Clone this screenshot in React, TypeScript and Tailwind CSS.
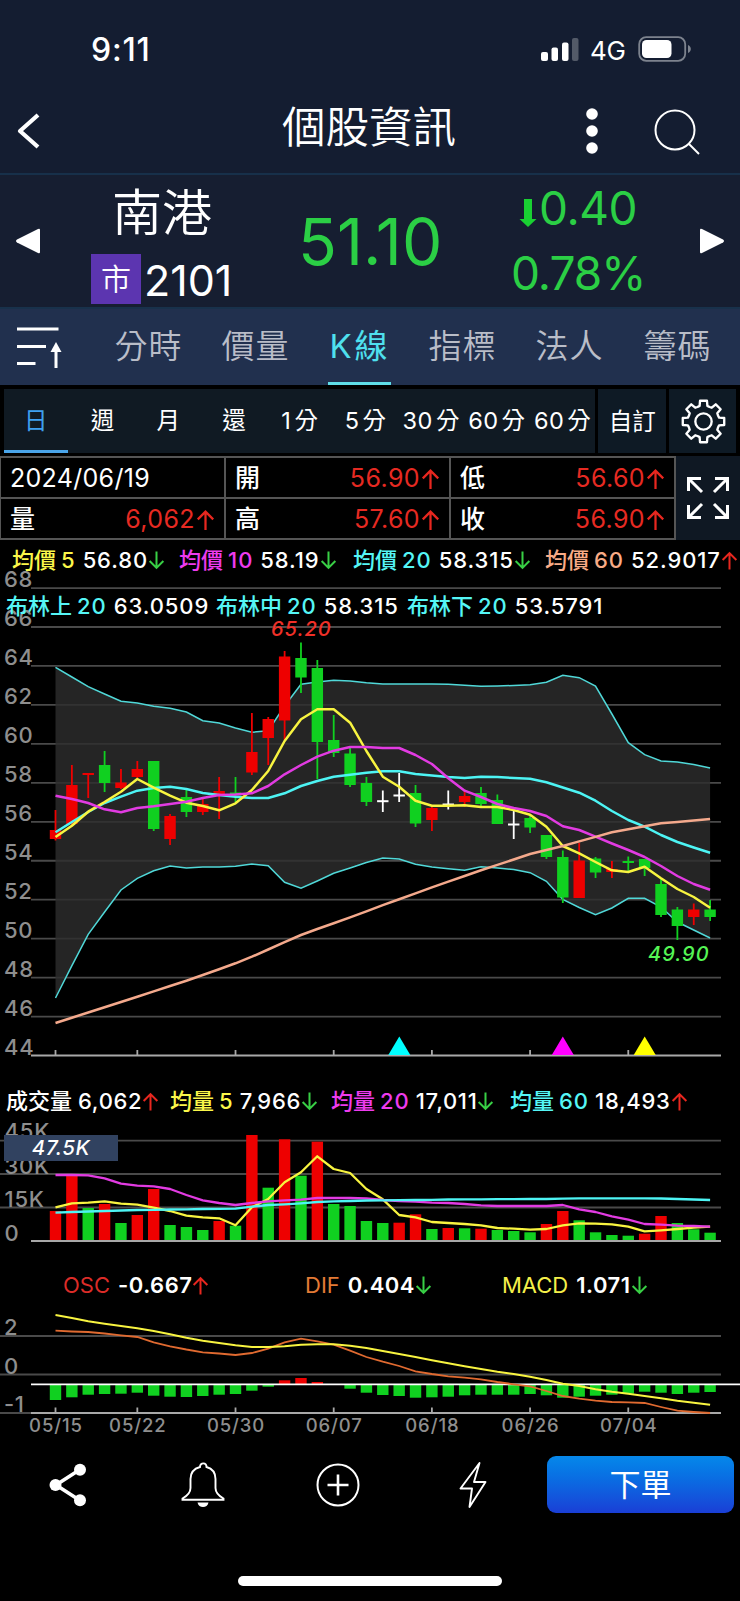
import React from 'react';

type Direction = 'up' | 'down';

interface LegendItem {
  name: string;
  period?: string;
  value: string;
  labelClass: string;
  dir?: Direction;
}

interface Candle {
  c: 'r' | 'g' | 'w';
  top: number;
  bottom: number;
  high: number;
  low: number;
}

const RED = '#ee0000';
const GREEN = '#10d020';

const STEP = 16.365;
const FIRST_X = 55.5;
const BAR_WIDTH = 11.4;

const xAt = (i: number) => FIRST_X + i * STEP;

function toPoints(ys: number[]): string {
  return ys.map((y, i) => `${xAt(i).toFixed(1)},${y}`).join(' ');
}

const TABS = ['分時', '價量', 'K線', '指標', '法人', '籌碼'];
const PERIODS = [
  ['', '日'],
  ['', '週'],
  ['', '月'],
  ['', '還'],
  ['1', '分'],
  ['5', '分'],
  ['30', '分'],
  ['60', '分'],
  ['60', '分'],
];

const PRICE_TICKS = [68, 66, 64, 62, 60, 58, 56, 54, 52, 50, 48, 46, 44];
const DATE_TICKS = [
  { i: 0, label: '05/15' },
  { i: 5, label: '05/22' },
  { i: 11, label: '05/30' },
  { i: 17, label: '06/07' },
  { i: 23, label: '06/18' },
  { i: 29, label: '06/26' },
  { i: 35, label: '07/04' },
];

const priceY = (price: number) => 1055.5 - (price - 44) * 19.477;

// [color, body top, body bottom, high, low]
const RAW_CANDLES: [Candle['c'], number, number, number, number][] = [
  ['r', 830, 839, 810, 840.5],
  ['r', 785, 824, 765, 826],
  ['r', 773, 775, 773, 798],
  ['g', 765, 783, 751, 792],
  ['r', 782.5, 788, 769, 789],
  ['r', 769, 777, 761, 778],
  ['g', 761, 829, 761, 831],
  ['r', 816, 839, 814, 845],
  ['g', 797, 812, 790, 817],
  ['r', 804, 812, 799, 815],
  ['r', 791, 796, 777, 819],
  ['g', 792.5, 795.5, 777, 802],
  ['r', 752, 772.5, 713, 775],
  ['r', 719, 738, 717, 765],
  ['r', 656.5, 720.5, 651, 740],
  ['g', 658, 677.5, 642.5, 693],
  ['g', 668, 742, 660, 779],
  ['g', 740, 753, 715, 757],
  ['g', 753.5, 785, 748, 787],
  ['g', 783, 802, 777, 806],
  ['w', 800.2, 802.2, 790.5, 812],
  ['w', 794.5, 796.5, 773, 802],
  ['g', 793, 823.5, 785, 827],
  ['r', 808, 820, 807, 831],
  ['w', 803.5, 805.5, 790.5, 809.5],
  ['r', 796, 802, 791, 807],
  ['g', 793, 804, 787, 807],
  ['g', 800, 824, 794.5, 824],
  ['w', 823.5, 825.5, 811, 839],
  ['g', 818, 827.5, 815, 833],
  ['g', 835, 857, 835, 859],
  ['g', 857, 897.5, 850.5, 903],
  ['r', 860.5, 898, 843, 898],
  ['g', 858.5, 872.5, 857, 878],
  ['r', 869, 872, 861, 878],
  ['g', 861, 863, 856.5, 872],
  ['g', 859, 868, 859, 876],
  ['g', 884, 915, 878, 917],
  ['g', 909.5, 926, 907, 940],
  ['r', 909.5, 917, 903.5, 925],
  ['g', 909.5, 917, 900, 921],
];

const CANDLES: Candle[] = RAW_CANDLES.map(([c, top, bottom, high, low]) => ({ c, top, bottom, high, low }));

const MA5 = [
  837, 825.7, 811.7, 802, 791.7, 779, 787.7, 795.7, 802.7, 806, 810.3, 803.3, 790, 771, 741, 719.3, 709.3, 709.3,
  722.7, 751, 776.7, 786.7, 800.7, 805.7, 805.7, 805.3, 807, 807, 810, 814.7, 826.7, 846, 853.3, 862, 870.3, 872,
  866.7, 878.3, 889, 897, 907.7,
];
const MA10 = [
  795.7, 799, 803, 809.3, 812.3, 808, 806.3, 804, 801.7, 798, 795, 794.5, 793.3, 786, 774.3, 765, 756.7, 750.7, 747,
  747, 748, 748, 755, 764, 778.3, 790.7, 797, 804, 808, 811, 816, 826.3, 830, 836.7, 843.5, 850, 857, 866, 876, 884,
  889.7,
];
const MA20 = [
  832.3, 822, 812, 803, 796.7, 790.7, 788, 786.7, 789, 793, 795, 796.7, 798, 798, 793.3, 786, 781, 776.7, 774.7,
  772.7, 771.3, 771.3, 774, 775.5, 777, 778, 776.7, 777, 778, 778.7, 782.3, 787.5, 792.7, 800.7, 811, 820, 826.7, 835,
  842, 847.5, 852.7,
];
const MA60 = [
  1023, 1017.7, 1012.5, 1007.2, 1002, 996.7, 991.4, 986, 980.7, 975, 969.2, 963.3, 956.7, 949.5, 942.2, 935, 929,
  923.3, 917.3, 911.3, 905.2, 899.3, 893.3, 887.3, 881.6, 876, 870.3, 864.9, 859.5, 854, 850, 846, 841.4, 836.9,
  832.3, 829.3, 826.3, 823.3, 822, 820.6, 819,
];
const BOLL_UPPER = [
  667.3, 677, 686.7, 694, 701.3, 703, 706.3, 708.3, 712, 720.7, 723, 728, 732.3, 730.7, 706, 684.3, 682, 680.3, 681,
  682.7, 684, 684, 684, 684, 684.3, 685.3, 686.3, 686, 685.5, 684.7, 682.3, 675.3, 677.7, 686, 714, 742.7, 754.7, 761,
  762, 764.5, 768,
];
const BOLL_LOWER = [
  998, 965.7, 934.3, 912, 890, 878.3, 870.7, 866, 868, 867, 867, 866.3, 864, 865.7, 882.3, 888.3, 881, 873.3, 868,
  862.5, 858, 859, 864.3, 867, 868.7, 870.3, 866.7, 868, 869.5, 872.7, 881.3, 899.3, 907.5, 914.7, 908, 898.3, 898.3,
  907, 922, 930, 938,
];

const VOLUME_COLORS = 'rrgrgrrgggrgrgrgrgggg' + 'rrgrgrgggrrgggg' + 'rrggg';
const VOLUME_TOPS = [
  1211, 1174, 1208, 1204, 1223, 1215, 1189, 1225, 1227, 1230, 1221, 1225.7, 1135, 1187.7, 1139.3, 1175.7, 1141.7,
  1204, 1206, 1221, 1223, 1222.7, 1214.3, 1229, 1228, 1228.3, 1228.7, 1230, 1231, 1232.3, 1224, 1211, 1220.3, 1232.3,
  1235, 1235.7, 1233.7, 1216, 1223, 1229.3, 1232.7,
];
const VOL5 = [
  1207.3, 1203.3, 1202.7, 1201.3, 1203.7, 1204.7, 1207.7, 1211, 1215.7, 1217.3, 1218.3, 1225.3, 1207.3, 1199, 1182.3,
  1172.3, 1156.3, 1169, 1173, 1189, 1199.3, 1215, 1217.3, 1222, 1223, 1224, 1225.3, 1228, 1228.7, 1229.7, 1229,
  1225.3, 1223.3, 1223.7, 1224.3, 1226.7, 1231.3, 1230.3, 1229, 1227.7, 1226.7,
];
const VOL20 = [
  1175, 1175, 1175.3, 1178.3, 1183.7, 1185.7, 1186.3, 1189, 1195, 1200.3, 1203, 1205, 1203, 1201.3, 1200.3, 1199.7,
  1198, 1198, 1198, 1198.3, 1200, 1201, 1201.7, 1202.7, 1203, 1204, 1205.3, 1206, 1206, 1206, 1206, 1205, 1209.3,
  1212, 1216.3, 1219.7, 1224, 1224.7, 1225.7, 1226, 1226.7,
];
const VOL60 = [
  1212.7, 1212, 1211.5, 1211, 1210.5, 1210, 1209.8, 1209.5, 1209.3, 1209, 1208.8, 1208.7, 1206.7, 1205, 1204.3,
  1203.3, 1202, 1201.3, 1201, 1200.5, 1200.3, 1200.2, 1200, 1199.8, 1199.5, 1199.3, 1199.3, 1199.2, 1199.1, 1199,
  1199, 1198.6, 1198.3, 1198.3, 1198.3, 1198.3, 1198.3, 1198.5, 1199, 1199.5, 1200,
];

const OSC = [
  1400, 1397.3, 1394.7, 1394, 1393.7, 1392.7, 1395.7, 1396.7, 1397, 1396, 1394.7, 1394, 1390.7, 1386.7, 1380.3, 1378,
  1382, 1384.3, 1388.7, 1392.7, 1395, 1396, 1397.7, 1397.3, 1396.7, 1395.3, 1394.7, 1394.7, 1394.7, 1394, 1395.3,
  1397.7, 1396.7, 1395.7, 1394.7, 1393.7, 1391.7, 1392.7, 1394, 1392.7, 1392,
];
const DIF = [
  1330.7, 1331.5, 1332, 1333.5, 1335.3, 1337, 1342.3, 1346.3, 1349.5, 1352.3, 1353.5, 1355, 1353, 1348.7, 1342.3,
  1338.7, 1341.3, 1344.7, 1350.7, 1357, 1361.7, 1366, 1371.3, 1374, 1376.3, 1377.7, 1379.3, 1382, 1384.3, 1386.3,
  1391, 1396, 1398.7, 1400.7, 1402, 1402.3, 1403, 1407, 1410.7, 1412, 1413,
];
const MACD = [
  1315, 1318, 1321.3, 1323.7, 1326, 1328.3, 1331, 1334.3, 1337.7, 1340.7, 1343, 1345.3, 1347, 1347, 1346.3, 1344.7,
  1344.3, 1344.3, 1345.7, 1348, 1351, 1354, 1357, 1360.3, 1363.3, 1366.3, 1369, 1371.7, 1374, 1376.7, 1380, 1383.7,
  1386, 1389.3, 1391.7, 1393.7, 1396, 1398.3, 1400.7, 1402.7, 1404.7,
];

const PRICE_MA: LegendItem[] = [
  { name: '均價', period: '5', value: '56.80', labelClass: 'text-[#fbf74a]', dir: 'down' },
  { name: '均價', period: '10', value: '58.19', labelClass: 'text-[#ee3bee]', dir: 'down' },
  { name: '均價', period: '20', value: '58.315', labelClass: 'text-[#55f6f6]', dir: 'down' },
  { name: '均價', period: '60', value: '52.9017', labelClass: 'text-[#f9ab86]', dir: 'up' },
];
const BOLL: LegendItem[] = [
  { name: '布林上', period: '20', value: '63.0509', labelClass: 'text-[#55f6f6]' },
  { name: '布林中', period: '20', value: '58.315', labelClass: 'text-[#55f6f6]' },
  { name: '布林下', period: '20', value: '53.5791', labelClass: 'text-[#55f6f6]' },
];
const VOLUME_MA: LegendItem[] = [
  { name: '成交量', value: '6,062', labelClass: 'text-white', dir: 'up' },
  { name: '均量', period: '5', value: '7,966', labelClass: 'text-[#fbf74a]', dir: 'down' },
  { name: '均量', period: '20', value: '17,011', labelClass: 'text-[#ee3bee]', dir: 'down' },
  { name: '均量', period: '60', value: '18,493', labelClass: 'text-[#55f6f6]', dir: 'up' },
];
const MACD_LEGEND: LegendItem[] = [
  { name: 'OSC', value: '-0.667', labelClass: 'text-[#dc2c28]', dir: 'up' },
  { name: 'DIF', value: '0.404', labelClass: 'text-[#e47b35]', dir: 'down' },
  { name: 'MACD', value: '1.071', labelClass: 'text-[#f5f04a]', dir: 'down' },
];

function Arrow({ dir, className }: { dir: Direction; className: string }) {
  return (
    <svg
      viewBox="0 0 16 18"
      className={`${className} ${dir === 'up' ? 'text-[#e8271f]' : 'text-[#38cf45]'}`}
      fill="none"
      stroke="currentColor"
      strokeWidth="1.9"
    >
      {dir === 'up' ? <path d="M8 17.5V2M1.5 8.5 8 2l6.5 6.5" /> : <path d="M8 .5V16M1.5 9.5 8 16l6.5-6.5" />}
    </svg>
  );
}

function Legend({
  items,
  className,
  labelClass = 'font-medium',
  valueClass = 'ml-[7px] font-medium tracking-[0.9px]',
}: {
  items: LegendItem[];
  className: string;
  labelClass?: string;
  valueClass?: string;
}) {
  return (
    <div className={`grid whitespace-nowrap text-[22px] leading-[30px] ${className}`}>
      {items.map((item, index) => (
        <div key={index} className="flex items-center">
          <span className={`${labelClass} ${item.labelClass}`}>
            {item.name}
            {item.period && <span className="ml-[5px] tracking-[1px]">{item.period}</span>}
          </span>
          <span className={`flex items-center text-white ${valueClass}`}>
            {item.value}
            {item.dir && <Arrow dir={item.dir} className="h-[19px] w-[17px]" />}
          </span>
        </div>
      ))}
    </div>
  );
}

function StatusBar() {
  return (
    <div className="flex h-[98px] items-center pl-[91px] pr-[49px] text-white">
      <span className="pt-[2px] text-[32px] font-medium leading-none tracking-[0.8px]">9:11</span>
      <svg viewBox="0 0 38 23" className="ml-auto h-[23px] w-[38px]" fill="#fff">
        <rect x="0" y="14" width="7" height="9" rx="2" />
        <rect x="10.5" y="9.5" width="6.5" height="13.5" rx="2" />
        <rect x="21" y="4.5" width="6.5" height="18.5" rx="2" />
        <rect x="31" y="0" width="6.5" height="23" rx="2" opacity=".27" />
      </svg>
      <span className="ml-[11px] w-[37px] pt-[3px] text-[26px] leading-none tracking-[-0.2px]">4G</span>
      <svg viewBox="0 0 53 26" className="ml-[11px] h-[26px] w-[53px]">
        <rect x="1.2" y="1.2" width="46" height="23.6" rx="7" fill="none" stroke="#7d838e" strokeWidth="1.8" />
        <rect x="4" y="4" width="29.5" height="18" rx="4.5" fill="#fff" />
        <path d="M50 9c2 .8 2.8 2.4 2.8 4s-.8 3.2-2.8 4z" fill="#7d838e" />
      </svg>
    </div>
  );
}

function TitleBar() {
  return (
    <div className="flex h-[75px] items-center pb-[9px] text-white">
      <svg viewBox="0 0 24 36" className="ml-[16px] h-[36px] w-[24px]" fill="none" stroke="#fff" strokeWidth="4.2">
        <path d="M22 2 4 18l18 16" strokeLinejoin="round" />
      </svg>
      <h1 className="ml-[242px] w-[190px] pb-[6px] text-[43.5px] font-[350] leading-none">個股資訊</h1>
      <svg viewBox="0 0 12 46" className="ml-[114px] h-[46px] w-[12px]" fill="#fff">
        <circle cx="6" cy="6" r="5.8" />
        <circle cx="6" cy="23" r="5.8" />
        <circle cx="6" cy="40" r="5.8" />
      </svg>
      <svg viewBox="0 0 46 46" className="ml-[56px] mt-[2px] h-[46px] w-[46px]" fill="none" stroke="#fff" strokeWidth="2">
        <circle cx="21" cy="21" r="19.5" />
        <path d="m34.500 34.500 10.500 10.500" />
      </svg>
    </div>
  );
}

function QuotePanel() {
  return (
    <div className="flex h-[134px] items-stretch border-t-2 border-[#17304a] bg-[#161e31]">
      <svg viewBox="0 0 24 26" className="ml-[16px] mt-[53px] h-[26px] w-[24px] shrink-0" fill="#fff">
        <path d="M1 11.5 22 1q2-1 2 1v22q0 2-2 1L1 14.5q-2-1.5 0-3z" />
      </svg>
      <div className="ml-[51px] w-[145px] shrink-0 text-white">
        <div className="mt-[11px] pl-[21px] text-[50px] font-[350] leading-[54px]">南港</div>
        <div className="mt-[14px] flex items-center">
          <span className="flex h-[50px] w-[50px] items-center justify-center bg-[#5c35b0] text-[30px] font-[350] leading-none">
            市
          </span>
          <span className="ml-[3px] pt-[2px] text-[43px] leading-none">2101</span>
        </div>
      </div>
      <div className="ml-[62px] w-[170px] shrink-0 pt-[33px] text-[64px] leading-[68px] text-[#2bcf45]">51.10</div>
      <div className="ml-[43px] w-[140px] shrink-0 pt-[3px] text-[46px] text-[#2bcf45]">
        <div className="flex h-[60px] items-center pl-[8px]">
          <svg viewBox="0 0 18 28" className="mt-[10px] h-[28px] w-[18px]" fill="#19d032">
            <path d="M5 0h8v20h4.500L9 28 .5 20H5z" />
          </svg>
          <span className="ml-[2px] leading-none tracking-[-0.4px]">0.40</span>
        </div>
        <div className="flex h-[70px] items-center leading-none tracking-[-1px]">0.78%</div>
      </div>
      <svg viewBox="0 0 24 26" className="ml-[49px] mt-[53px] h-[26px] w-[24px] shrink-0" fill="#fff">
        <path d="M23 11.5 2 1Q0 0 0 2v22q0 2 2 1l21-10.5q2-1.5 0-3z" />
      </svg>
    </div>
  );
}

function TabBar() {
  return (
    <div className="flex h-[78px] border-t-2 border-[#18314b] bg-[#21304e]">
      <svg viewBox="0 0 46 42" className="ml-[17px] mt-[18px] h-[42px] w-[46px] shrink-0" stroke="#fff" strokeWidth="3">
        <path d="M0 2h41.5M0 19.5h29M0 36.5h18.5M39 41V22" />
        <path d="m39 15 5.500 10h-11z" fill="#fff" stroke="none" />
      </svg>
      <div className="ml-[32px] grid grid-cols-[107px_107px_101px_105px_109px_107px] text-[33px] font-[350] text-[#b9bdc8]">
        {TABS.map((tab) => (
          <div key={tab} className="flex justify-center">
            <span
              className={`border-b-[3px] pt-[13px] leading-[48px] ${
                tab === 'K線'
                  ? 'border-[#5fdde8] pb-[12px] pl-[1px] font-normal tracking-[3px] text-[#4fe0ee]'
                  : 'border-transparent tracking-[1px]'
              }`}
            >
              {tab}
            </span>
          </div>
        ))}
      </div>
    </div>
  );
}

function GearIcon() {
  const teeth = Array.from({ length: 8 }, (_, k) => {
    const at = (deg: number, r: number) => {
      const a = ((k * 45 + deg - 90) * Math.PI) / 180;
      return `${(24 + r * Math.cos(a)).toFixed(1)} ${(24 + r * Math.sin(a)).toFixed(1)}`;
    };
    return `${at(-14, 15.8)}L${at(-9.5, 20.6)}L${at(9.5, 20.6)}L${at(14, 15.8)}L${at(22.5, 15.4)}`;
  });
  return (
    <svg
      viewBox="0 0 48 48"
      className="h-[49px] w-[49px]"
      fill="none"
      stroke="#fff"
      strokeWidth="2.3"
      strokeLinejoin="round"
    >
      <path d={`M${teeth.join('L')}Z`} />
      <circle cx="24" cy="24" r="8" />
    </svg>
  );
}

function PeriodBar() {
  return (
    <div className="flex h-[71px] gap-[3px] bg-black px-[4px] pb-[3px] pt-[4px] text-[23.5px] text-white">
      <div className="grid w-[593px] grid-cols-[repeat(9,65.7px)] bg-[#101a23]">
        {PERIODS.map(([count, unit], index) => (
          <div
            key={index}
            className={`flex items-center justify-center whitespace-nowrap border-b-[3px] pt-[3px] ${
              index === 0 ? 'mr-[2px] border-[#4aa5ea] text-[#3fa0f0]' : 'border-transparent'
            }`}
          >
            <span className="tracking-[0.5px]">{count}</span>
            <span className={count ? 'ml-[3px]' : ''}>{unit}</span>
          </div>
        ))}
      </div>
      <div className="flex w-[68px] items-center justify-center bg-[#0e1a25] pt-[1px]">自訂</div>
      <div className="flex w-[67px] items-center justify-center bg-[#0e1a25] pl-[2px]">
        <GearIcon />
      </div>
    </div>
  );
}

function PriceCell({ label, value }: { label: string; value: string }) {
  return (
    <div className="flex items-center justify-between border-b-2 border-r-2 border-[#555] pl-[9px] pr-[9px] pt-[2px]">
      <span className="text-[25px] font-medium text-white">{label}</span>
      <span className="flex items-center text-[25px] tracking-[0.4px] text-[#e62a22]">
        {value}
        <Arrow dir="up" className="ml-[1px] h-[22px] w-[19px]" />
      </span>
    </div>
  );
}

function PriceTable() {
  return (
    <div className="flex h-[84px]">
      <div className="grid w-[676px] grid-cols-3 grid-rows-2 border-l border-t-2 border-[#555] leading-none">
        <div className="flex items-center border-b-2 border-r-2 border-[#555] pl-[9px] pt-[2px] text-[25px] tracking-[0.3px] text-white">
          2024/06/19
        </div>
        <PriceCell label="開" value="56.90" />
        <PriceCell label="低" value="56.60" />
        <PriceCell label="量" value="6,062" />
        <PriceCell label="高" value="57.60" />
        <PriceCell label="收" value="56.90" />
      </div>
      <div className="flex flex-1 items-center justify-center bg-[#0f1823]">
        <svg viewBox="0 0 42 42" className="h-[42px] w-[42px]" fill="none" stroke="#fff" strokeWidth="3">
          <path d="M1.500 14V1.500H14M1.500 1.500 15 15M28 1.500h12.500V14M40.500 1.500 27 15M1.500 28v12.500H14M1.500 40.500 15 27M28 40.500h12.500V28M40.500 40.500 27 27" />
        </svg>
      </div>
    </div>
  );
}

function PriceChart() {
  const band = `${toPoints(BOLL_UPPER)} ${BOLL_LOWER.map((y, i) => `${xAt(i).toFixed(1)},${y}`).reverse().join(' ')}`;
  return (
    <div className="relative h-[500px]">
      <svg viewBox="0 572 740 500" className="block h-[500px] w-[740px] overflow-visible" fill="none">
        {PRICE_TICKS.map((price) => (
          <path
            key={price}
            d={`M31 ${priceY(price)}H721`}
            stroke={price === 44 ? '#a8a8a8' : '#4a4a4a'}
            strokeWidth="1.8"
          />
        ))}
        {DATE_TICKS.map(({ i }) => (
          <path key={i} d={`M${xAt(i)} 1050v5`} stroke="#a8a8a8" strokeWidth="1.8" />
        ))}
        <polygon points={band} fill="#2d2d2d" fillOpacity=".82" />
        <polyline points={toPoints(BOLL_UPPER)} stroke="#50d8d8" strokeWidth="1.5" />
        <polyline points={toPoints(BOLL_LOWER)} stroke="#50d8d8" strokeWidth="1.5" />
        {CANDLES.map(({ c, top, bottom, high, low }, i) => {
          const color = c === 'r' ? RED : c === 'g' ? GREEN : '#fff';
          return (
            <g key={i} fill={color}>
              <rect x={xAt(i) - 0.9} y={high} width="1.8" height={low - high} />
              <rect x={xAt(i) - BAR_WIDTH / 2} y={top} width={BAR_WIDTH} height={bottom - top} />
            </g>
          );
        })}
        <g strokeWidth="2.5" strokeLinejoin="round">
          <polyline points={toPoints(MA20)} stroke="#4df4f4" />
          <polyline points={toPoints(MA5)} stroke="#f8f440" />
          <polyline points={toPoints(MA10)} stroke="#e23be2" />
          <polyline points={toPoints(MA60)} stroke="#f4a98c" />
        </g>
        <path d="M399.3 1036.5l11 18.5h-22z" fill="#0ff" />
        <path d="M562.8 1036.5l11 18.5h-22z" fill="#f0f" />
        <path d="M644.7 1036.5l11 18.5h-22z" fill="#ff0" />
        <g fill="#8e8e8e" fontSize="22" letterSpacing=".7" fontWeight="450">
          {PRICE_TICKS.map((price) => (
            <text key={price} x="4" y={priceY(price) - 1}>
              {price}
            </text>
          ))}
        </g>
        <g fontSize="20" fontStyle="italic" fontWeight="500" letterSpacing="1">
          <text x="271" y="636" fill="#f03028">
            65.20
          </text>
          <text x="648" y="960.5" fill="#55f555">
            49.90
          </text>
        </g>
      </svg>
      <Legend items={BOLL} className="absolute left-[6px] top-[19px] grid-cols-[210px_191px_200px]" />
    </div>
  );
}

function VolumeChart() {
  return (
    <div className="relative h-[140px]">
      <svg viewBox="0 1122 740 140" className="block h-[140px] w-[740px] overflow-visible" fill="none">
        <path d="M0 1140.7H721M0 1174H721M0 1207.5H721" stroke="#4a4a4a" strokeWidth="1.8" />
        {VOLUME_TOPS.map((top, i) => (
          <rect
            key={i}
            x={xAt(i) - BAR_WIDTH / 2}
            y={top}
            width={BAR_WIDTH}
            height={1241 - top}
            fill={VOLUME_COLORS[i] === 'r' ? RED : GREEN}
          />
        ))}
        <path d="M31 1241H721" stroke="#a8a8a8" strokeWidth="1.8" />
        <g strokeWidth="2.3" strokeLinejoin="round">
          <polyline points={toPoints(VOL5)} stroke="#f8f440" />
          <polyline points={toPoints(VOL20)} stroke="#e23be2" />
          <polyline points={toPoints(VOL60)} stroke="#4df4f4" />
        </g>
        <g fill="#8e8e8e" fontSize="22" letterSpacing=".8" fontWeight="450">
          <text x="4.5" y="1139">45K</text>
          <text x="4.5" y="1173.5">30K</text>
          <text x="4.5" y="1206.5">15K</text>
          <text x="4.5" y="1240.5">0</text>
        </g>
      </svg>
      <div className="absolute left-[4px] top-[13px] flex h-[26px] w-[114px] items-center justify-center bg-[#314260] text-[20.5px] font-medium italic tracking-[0.6px] text-white">
        47.5K
      </div>
    </div>
  );
}

function MacdChart() {
  return (
    <svg viewBox="0 1306 740 134" className="block h-[134px] w-[740px]" fill="none">
      <path d="M0 1336H721M0 1374.5H721M0 1413H31" stroke="#4a4a4a" strokeWidth="1.8" />
      <path d="M31 1413H721" stroke="#a8a8a8" strokeWidth="1.8" />
      {DATE_TICKS.map(({ i }) => (
        <path key={i} d={`M${xAt(i)} 1407.5v5`} stroke="#a8a8a8" strokeWidth="1.8" />
      ))}
      {OSC.map((y, i) => (
        <rect
          key={i}
          x={xAt(i) - BAR_WIDTH / 2}
          y={Math.min(y, 1384.3)}
          width={BAR_WIDTH}
          height={Math.abs(y - 1384.3)}
          fill={y < 1384.3 ? RED : GREEN}
        />
      ))}
      <path d="M31 1384.3H740" stroke="#fff" strokeWidth="1.8" />
      <polyline points={toPoints(DIF)} stroke="#e06a30" strokeWidth="1.8" />
      <polyline points={toPoints(MACD)} stroke="#f8f440" strokeWidth="1.9" />
      <g fill="#8e8e8e" fontSize="22" letterSpacing=".7" fontWeight="450">
        <text x="4" y="1335">2</text>
        <text x="4" y="1373.5">0</text>
        <text x="4" y="1412">-1</text>
      </g>
      <g fill="#8e8e8e" fontSize="18.5" fontWeight="450" textAnchor="middle" letterSpacing=".9">
        {DATE_TICKS.map(({ i, label }) => (
          <text key={i} x={xAt(i) + 0.5} y="1431.5">
            {label}
          </text>
        ))}
      </g>
    </svg>
  );
}

function BottomBar() {
  return (
    <div className="flex h-[161px] flex-col items-center justify-between pb-[15px] pt-[16px]">
      <div className="flex w-full items-center pr-[6px]">
        <svg viewBox="0 0 38 44" className="ml-[49px] h-[44px] w-[38px]" fill="#fff">
          <path d="M31 6.5 7 22l24 15.5" fill="none" stroke="#fff" strokeWidth="3.6" />
          <circle cx="31" cy="6.8" r="6" />
          <circle cx="6.5" cy="22" r="6" />
          <circle cx="31" cy="37.2" r="6" />
        </svg>
        <svg viewBox="0 0 44 46" className="ml-[94px] h-[46px] w-[44px]" fill="none" stroke="#fff" strokeWidth="1.9">
          <path d="M19 5C19 .2 25.500.2 25.500 5c6.500 1.800 9 6.500 9 12v9c0 5 3.500 8 8 10.500v1.300H1.500v-1.300C6 34 9.500 31 9.500 26v-9c0-5.500 3-10.200 9.500-12z" />
          <path d="M16.500 40.500h11c-1 6-10 6-11 0z" fill="#fff" stroke="none" />
        </svg>
        <svg viewBox="0 0 44 44" className="ml-[91px] h-[44px] w-[44px]" fill="none" stroke="#fff" strokeWidth="2">
          <circle cx="22" cy="22" r="20.5" />
          <path d="M22 11.5v21M11.5 22h21" strokeWidth="2.6" />
        </svg>
        <svg viewBox="0 0 28 48" className="ml-[99px] h-[48px] w-[28px]" fill="none" stroke="#fff" strokeWidth="1.9">
          <path d="M20.5 2 1.5 27.5H13L10.5 46l16-25H15z" strokeLinejoin="round" />
        </svg>
        <button className="ml-auto h-[57px] w-[187px] rounded-[9px] bg-linear-to-b from-[#0688ea] to-[#1a3ed6] text-[31px] leading-none text-white">
          下單
        </button>
      </div>
      <div className="h-[10px] w-[264px] rounded-full bg-white" />
    </div>
  );
}

export default function App() {
  return (
    <div className="h-[1601px] w-[740px] overflow-hidden bg-black font-['Inter','Noto_Sans_CJK_TC',sans-serif]">
      <div className="bg-[#141d31]">
        <StatusBar />
        <TitleBar />
      </div>
      <QuotePanel />
      <TabBar />
      <PeriodBar />
      <PriceTable />
      <Legend items={PRICE_MA} className="h-[32px] grid-cols-[167px_174px_192px_200px] pl-[12px] pt-[5px]" />
      <PriceChart />
      <Legend
        items={VOLUME_MA}
        className="h-[50px] grid-cols-[164px_161px_179px_200px] pl-[6px] pt-[8px]"
        valueClass="ml-[6px] font-medium tracking-[0.7px]"
      />
      <VolumeChart />
      <Legend
        items={MACD_LEGEND}
        className="h-[44px] grid-cols-[242px_197px_200px] pl-[63px] pt-[2px]"
        labelClass="font-normal"
        valueClass="ml-[8px] font-semibold tracking-[0.5px]"
      />
      <MacdChart />
      <BottomBar />
    </div>
  );
}
